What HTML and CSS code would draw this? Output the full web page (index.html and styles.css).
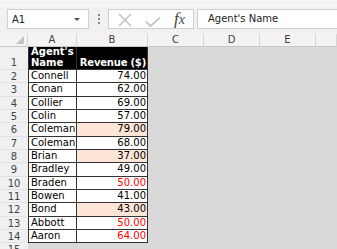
FILE: index.html
```html
<!DOCTYPE html>
<html lang="en">
<head>
    <meta charset="UTF-8">
    <title>Revenue Sheet</title>
    <link rel="stylesheet" href="styles.css">
</head>
<body>
    <div class="toolbar">
        <div class="namebox"><span>A1</span><span class="arrow"></span></div>
        <div class="dots"><i></i><i></i><i></i></div>
        <div class="fxbox">
            <svg class="cancel" width="14" height="14" viewBox="0 0 14 14">
                <path d="M1 1 L13 13 M13 1 L1 13" stroke="#bdbdbd" stroke-width="1.4" fill="none"/>
            </svg>
            <svg class="enter" width="16" height="10" viewBox="0 0 16 10">
                <path d="M1 4.5 L5.5 9 L15 0.5" stroke="#bdbdbd" stroke-width="1.6" fill="none"/>
            </svg>
            <span class="fx">f<span>x</span></span>
        </div>
        <div class="formula">Agent's Name</div>
    </div>

    <div class="sheet" id="sheet">
        <div class="corner">
            <svg width="8" height="8" viewBox="0 0 8 8"><polygon points="8,0 8,8 0,8" fill="#c4c4c4"/></svg>
        </div>
        <div class="colhead">A</div>
        <div class="colhead">B</div>
        <div class="colhead">C</div>
        <div class="colhead">D</div>
        <div class="colhead">E</div>
        <div class="colhead"></div>

        <div class="rowhead title-row">1</div>
        <div class="cell title">Agent's Name</div>
        <div class="cell title num">Revenue ($)</div>
        <div class="empty"></div>
        <div class="empty"></div>
        <div class="empty"></div>
        <div class="empty"></div>
    </div>

    <script>
        const agents = [
            { name: "Connell", revenue: 74 },
            { name: "Conan", revenue: 62 },
            { name: "Collier", revenue: 69 },
            { name: "Colin", revenue: 57 },
            { name: "Coleman", revenue: 79, mark: "high" },
            { name: "Coleman", revenue: 68 },
            { name: "Brian", revenue: 37, mark: "high" },
            { name: "Bradley", revenue: 49 },
            { name: "Braden", revenue: 50, mark: "red" },
            { name: "Bowen", revenue: 41 },
            { name: "Bond", revenue: 43, mark: "high" },
            { name: "Abbott", revenue: 50, mark: "red" },
            { name: "Aaron", revenue: 64, mark: "red" }
        ];

        const sheet = document.getElementById("sheet");

        function addCell(cls, text) {
            const div = document.createElement("div");
            div.className = cls;
            div.textContent = text || "";
            sheet.appendChild(div);
        }

        agents.forEach((agent, i) => {
            addCell("rowhead", i + 2);
            addCell("cell", agent.name);
            addCell("cell num" + (agent.mark ? " " + agent.mark : ""), agent.revenue.toFixed(2));
            for (let c = 0; c < 4; c++) addCell("empty");
        });

        // partly visible row 15
        addCell("rowhead", 15);
        for (let c = 0; c < 6; c++) addCell("empty");
    </script>
</body>
</html>
```

FILE: styles.css
```css
body {
    margin: 0;
    width: 337px;
    height: 249px;
    overflow: hidden;
    background-color: #f1f1f1;
    font-family: "DejaVu Sans", Verdana, sans-serif;
    font-size: 10px;
    color: #000;
}

.toolbar {
    display: flex;
    align-items: flex-start;
    height: 34px;
    padding: 2px 0 0 7px;
    box-sizing: border-box;
    border-top: 7px solid #f6f6f6;
}

.namebox,
.fxbox,
.formula {
    height: 20px;
    box-sizing: border-box;
    background-color: #fff;
    border: 1px solid #cfcfcf;
}

.namebox {
    width: 82px;
    display: flex;
    align-items: center;
    justify-content: space-between;
    padding: 0 8px 0 4px;
    color: #222;
}

.arrow {
    width: 0;
    height: 0;
    border-left: 3px solid transparent;
    border-right: 3px solid transparent;
    border-top: 3px solid #555;
}

.dots {
    width: 19px;
    height: 20px;
    display: flex;
    flex-direction: column;
    align-items: center;
    justify-content: center;
    gap: 2px;
}

.dots i {
    width: 2px;
    height: 2px;
    background-color: #888;
}

.fxbox {
    width: 86px;
    display: flex;
    align-items: center;
    padding-left: 9px;
}

.cancel {
    margin-top: 1px;
}

.enter {
    margin-left: 13px;
    margin-top: 6px;
}

.fx {
    margin-left: 13px;
    font-family: "Liberation Serif", serif;
    font-style: italic;
    font-size: 17px;
    color: #444;
    line-height: 18px;
}

.fx span {
    font-size: 14px;
}

.formula {
    flex: 1;
    margin-left: 3px;
    border-right: none;
    padding-left: 10px;
    line-height: 18px;
    color: #222;
}

.sheet {
    display: grid;
    grid-template-columns: 28px 49px 71px 56px 56px 56px 1fr;
    grid-template-rows: 13px 23px repeat(14, 13.333px);
}

.corner,
.colhead {
    background-color: #f3f3f3;
    border-bottom: 1px solid #c8c8c8;
    box-sizing: border-box;
}

.corner {
    display: flex;
    justify-content: flex-end;
    align-items: flex-end;
    padding: 0 3px 2px 0;
    border-right: 1px solid #d6d6d6;
}

.colhead {
    text-align: center;
    line-height: 12px;
    color: #444;
    border-right: 1px solid #d6d6d6;
}

.rowhead {
    background-color: #f0f0f0;
    color: #444;
    text-align: center;
    line-height: 13px;
    border-bottom: 1px solid #e2e2e2;
    box-sizing: border-box;
}

.rowhead.title-row {
    display: flex;
    align-items: flex-end;
    justify-content: center;
    line-height: 12px;
}

.cell {
    background-color: #fff;
    border-right: 1px solid #333;
    border-bottom: 1px solid #333;
    box-sizing: border-box;
    padding: 0 1px 0 2px;
    line-height: 12px;
    white-space: nowrap;
    overflow: hidden;
}

.sheet > .cell:nth-child(7n+2) {
    border-left: 1px solid #333;
}

.num {
    text-align: right;
}

.high {
    background-color: #fce4d6;
}

.red {
    color: #ff0000;
}

.cell.title {
    background-color: #000;
    color: #fff;
    font-weight: bold;
    white-space: normal;
    line-height: 11px;
    display: flex;
    align-items: flex-end;
    padding-bottom: 1px;
}

.cell.title.num {
    justify-content: flex-end;
    white-space: nowrap;
    padding-left: 0;
    letter-spacing: -0.2px;
}

.empty {
    background-color: #d9d9d9;
}
```
